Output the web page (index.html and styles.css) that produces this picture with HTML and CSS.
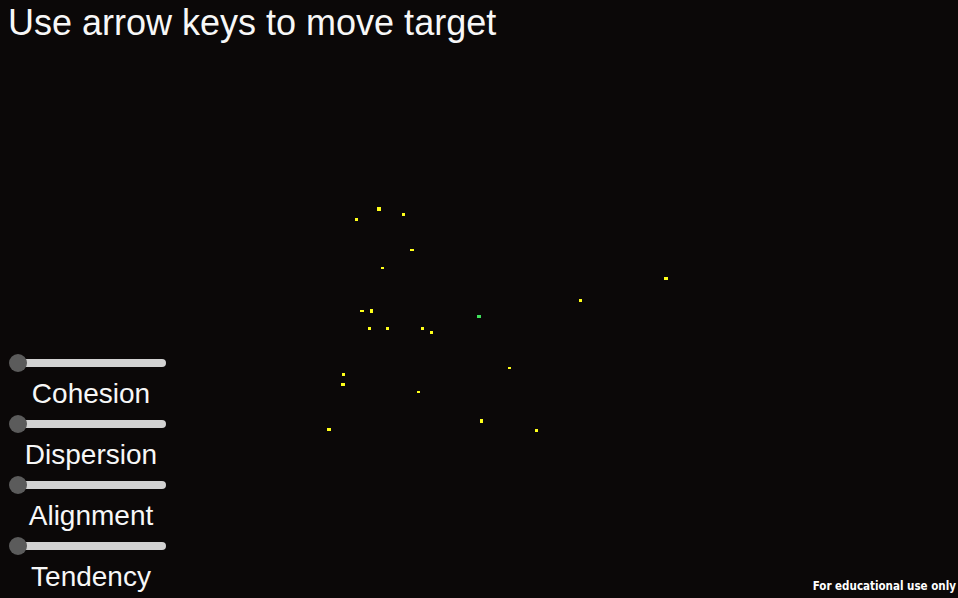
FILE: index.html
```html
<!DOCTYPE html>
<html lang="en">
<head>
<meta charset="utf-8">
<title>Flocking</title>
<link rel="stylesheet" href="styles.css">
</head>
<body>
<svg class="field" width="958" height="598" viewBox="0 0 958 598" aria-hidden="true">
  <g class="boid">
    <rect x="377" y="207" width="4" height="4"/>
    <rect x="355" y="218" width="3" height="3"/>
    <rect x="402" y="213" width="3" height="3"/>
    <rect x="410" y="249" width="4" height="2"/>
    <rect x="381" y="267" width="3" height="2"/>
    <rect x="360" y="310" width="4" height="2"/>
    <rect x="370" y="309" width="3" height="4"/>
    <rect x="368" y="327" width="3" height="3"/>
    <rect x="386" y="327" width="3" height="3"/>
    <rect x="421" y="327" width="3" height="3"/>
    <rect x="430" y="331" width="3" height="3"/>
    <rect x="342" y="373" width="3" height="3"/>
    <rect x="341" y="383" width="4" height="3"/>
    <rect x="417" y="391" width="3" height="2"/>
    <rect x="508" y="367" width="3" height="2"/>
    <rect x="480" y="419" width="3" height="4"/>
    <rect x="327" y="428" width="4" height="3"/>
    <rect x="535" y="429" width="3" height="3"/>
    <rect x="579" y="299" width="3" height="3"/>
    <rect x="664" y="277" width="4" height="3"/>
  </g>
  <rect class="target" x="477" y="315" width="4" height="3"/>
</svg>

<main class="page">
  <h1 class="title">Use arrow keys to move target</h1>

  <section class="controls">
    <div class="control">
      <div class="slider"><span class="track"></span><span class="thumb"></span></div>
      <div class="label">Cohesion</div>
    </div>
    <div class="control">
      <div class="slider"><span class="track"></span><span class="thumb"></span></div>
      <div class="label">Dispersion</div>
    </div>
    <div class="control">
      <div class="slider"><span class="track"></span><span class="thumb"></span></div>
      <div class="label">Alignment</div>
    </div>
    <div class="control">
      <div class="slider"><span class="track"></span><span class="thumb"></span></div>
      <div class="label">Tendency</div>
    </div>
  </section>
</main>

<footer class="note">For educational use only</footer>
</body>
</html>
```

FILE: styles.css
```css
html, body {
  margin: 0;
  padding: 0;
  width: 958px;
  height: 598px;
  overflow: hidden;
  background: #0b0808;
  color: #ffffff;
  font-family: "Liberation Sans", Arial, sans-serif;
}

body {
  position: relative;
}

.field {
  position: absolute;
  left: 0;
  top: 0;
}

.boid rect {
  fill: #ffff1a;
}

.target {
  fill: #3fe35c;
}

.page {
  position: relative;
  height: 598px;
  display: flex;
  flex-direction: column;
}

.title {
  margin: 0;
  padding: 3px 0 0 8px;
  font-size: 36px;
  font-weight: normal;
  line-height: 40px;
  color: #f7f7f7;
}

.controls {
  margin-top: auto;
  margin-bottom: 5px;
  margin-left: 9px;
  width: 164px;
  display: flex;
  flex-direction: column;
}

.control {
  display: flex;
  flex-direction: column;
  margin-bottom: 5px;
}

.control:last-child {
  margin-bottom: 0;
}

.slider {
  position: relative;
  width: 157px;
  height: 18px;
  margin-bottom: 6px;
}

.track {
  position: absolute;
  left: 9px;
  right: 0;
  top: 5px;
  height: 8px;
  border-radius: 0 4px 4px 0;
  background: #d2d2d2;
}

.thumb {
  position: absolute;
  left: 0;
  top: 0;
  width: 18px;
  height: 18px;
  border-radius: 50%;
  background: #5b5b5b;
}

.label {
  font-size: 28px;
  line-height: 32px;
  text-align: center;
  color: #f7f7f7;
}

.note {
  position: absolute;
  right: 2px;
  bottom: 5px;
  font-family: "DejaVu Sans Condensed", "DejaVu Sans", sans-serif;
  font-stretch: condensed;
  font-weight: bold;
  font-size: 11.5px;
  line-height: 14px;
  color: #ffffff;
}
```
